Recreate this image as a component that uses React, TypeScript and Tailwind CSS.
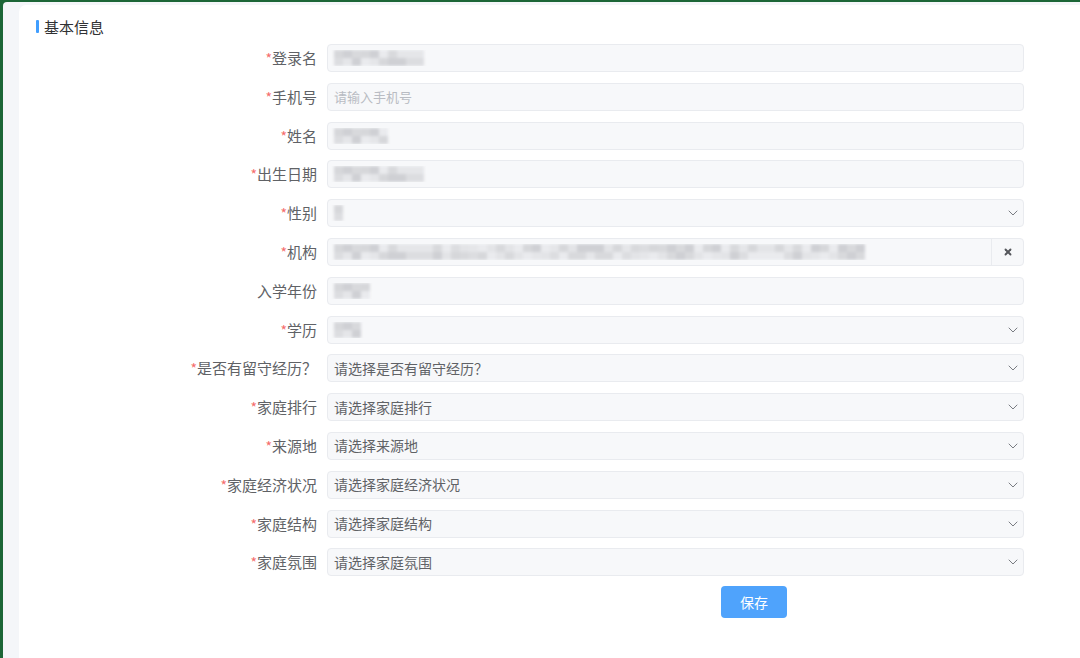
import React from 'react';
import { ChevronDown, X } from 'lucide-react';

type Field = {
  label: string;
  required?: boolean;
  kind: 'input' | 'select' | 'cascader';
  value?: number; // width of blurred value
  placeholder?: string;
};

const fields: Field[] = [
  { label: '登录名', required: true, kind: 'input', value: 86 },
  { label: '手机号', required: true, kind: 'input', placeholder: '请输入手机号' },
  { label: '姓名', required: true, kind: 'input', value: 50 },
  { label: '出生日期', required: true, kind: 'input', value: 86 },
  { label: '性别', required: true, kind: 'select', value: 10 },
  { label: '机构', required: true, kind: 'cascader', value: 530 },
  { label: '入学年份', kind: 'input', value: 40 },
  { label: '学历', required: true, kind: 'select', value: 30 },
  { label: '是否有留守经历？', required: true, kind: 'select', placeholder: '请选择是否有留守经历？' },
  { label: '家庭排行', required: true, kind: 'select', placeholder: '请选择家庭排行' },
  { label: '来源地', required: true, kind: 'select', placeholder: '请选择来源地' },
  { label: '家庭经济状况', required: true, kind: 'select', placeholder: '请选择家庭经济状况' },
  { label: '家庭结构', required: true, kind: 'select', placeholder: '请选择家庭结构' },
  { label: '家庭氛围', required: true, kind: 'select', placeholder: '请选择家庭氛围' },
];

const shades = [
  'bg-[#d6d7da]',
  'bg-[#e3e4e7]',
  'bg-[#cfd0d4]',
  'bg-[#dcdde0]',
  'bg-[#eaebee]',
  'bg-[#d8d9dc]',
  'bg-[#e5e6e9]',
];

// pixelated placeholder for the redacted values
const Mosaic: React.FC<{ width: number }> = ({ width }) => {
  const cols = Math.max(1, Math.round(width / 9));
  return (
    <div className="flex flex-col blur-[1.4px]">
      {[0, 1].map((r) => (
        <div key={r} className="flex">
          {Array.from({ length: cols }).map((_, c) => {
            const n = (c * 7919 + r * 104729 + c * c * 31) % 97;
            return <div key={c} className={`w-[9px] h-[8px] ${shades[n % shades.length]}`} />;
          })}
        </div>
      ))}
    </div>
  );
};

const FormRow: React.FC<{ field: Field }> = ({ field }) => (
  <div className="flex items-center h-[28px]">
    <div className="w-[308px] pr-[10px] text-right text-[15px] text-[#606266] leading-none -mt-[1px] whitespace-nowrap">
      {field.required && <span className="text-[#f56c6c] text-[14px]">*</span>}
      {field.label}
    </div>
    <div className="w-[697px] h-[28px] flex items-center bg-[#f7f8fa] border border-[#e9ebef] rounded-[4px]">
      <div className="flex-1 pl-[6px] flex items-center overflow-hidden">
        {field.value ? (
          <Mosaic width={field.value} />
        ) : field.kind === 'input' ? (
          <span className="text-[13px] text-[#b9bcc3]">{field.placeholder}</span>
        ) : (
          <span className="text-[14px] text-[#606266]">{field.placeholder}</span>
        )}
      </div>
      {field.kind === 'select' && (
        <ChevronDown size={16} strokeWidth={1.4} className="text-[#6f7278] mr-[2px]" />
      )}
      {field.kind === 'cascader' && (
        <div className="w-[32px] h-full border-l border-[#e9ebef] flex items-center justify-center">
          <X size={10} strokeWidth={4.5} className="text-[#55575c]" />
        </div>
      )}
    </div>
  </div>
);

export default function App() {
  return (
    <div
      className="w-[1080px] h-[658px] overflow-hidden bg-[#1c6637] pl-[3px] pt-[2px]"
      style={{ fontFamily: '"Noto Sans CJK SC", "Noto Sans", sans-serif' }}
    >
      <div className="w-full h-full bg-[#f4f6f9] rounded-tl-[4px] pl-[16px] pt-[3px]">
        <div className="w-full h-full bg-white rounded-tl-[7px]">
          <div className="flex items-center pl-[17px] pt-[11px] h-[31px]">
            <div className="w-[3px] h-[13px] bg-[#409eff] rounded-[1px]" />
            <span className="ml-[5px] text-[15px] text-[#303133] leading-none">基本信息</span>
          </div>
          <div className="flex flex-col gap-[10.8px] mt-[8px]">
            {fields.map((f) => (
              <FormRow key={f.label} field={f} />
            ))}
          </div>
          <div className="pl-[702px] pt-[10px]">
            <button className="w-[66px] h-[32px] bg-[#4fa3fc] text-white text-[14px] rounded-[4px]">
              保存
            </button>
          </div>
        </div>
      </div>
    </div>
  );
}
